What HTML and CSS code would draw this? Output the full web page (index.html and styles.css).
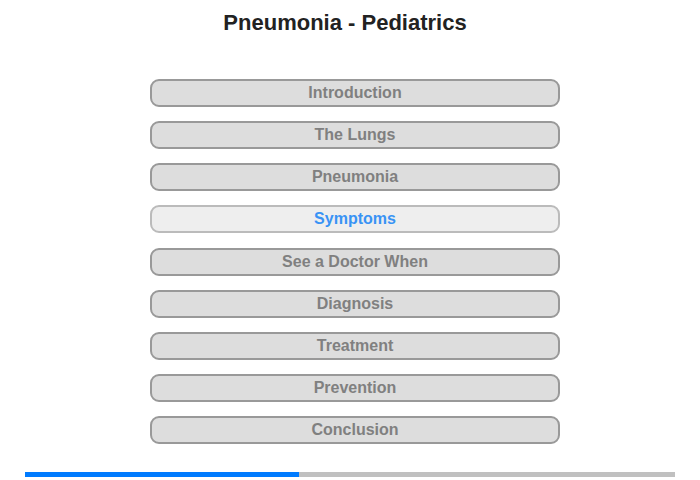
FILE: index.html
```html
<!DOCTYPE html>
<html lang="en">
  <head>
    <meta charset="UTF-8" />
    <title>Pneumonia - Pediatrics</title>
    <link rel="stylesheet" href="styles.css">
  </head>
  <body>
    <div class="page">
      <h1>Pneumonia - Pediatrics</h1>
      <nav class="menu">
        <a href="#" class="item">Introduction</a>
        <a href="#" class="item">The Lungs</a>
        <a href="#" class="item">Pneumonia</a>
        <a href="#" class="item active">Symptoms</a>
        <a href="#" class="item">See a Doctor When</a>
        <a href="#" class="item">Diagnosis</a>
        <a href="#" class="item">Treatment</a>
        <a href="#" class="item">Prevention</a>
        <a href="#" class="item">Conclusion</a>
      </nav>
      <div class="progress">
        <div class="progress-fill" style="width: 42.15%"></div>
      </div>
    </div>
  </body>
</html>
```

FILE: styles.css
```css
* {
  box-sizing: border-box;
  margin: 0;
  padding: 0;
}
body {
  font-family: "Liberation Sans", Arial, sans-serif;
  background: #fff;
  color: #222;
}
.page {
  width: 700px;
  height: 480px;
  padding-top: 10px;
}
h1 {
  width: 690px;
  text-align: center;
  font-size: 22px;
  font-weight: bold;
  line-height: 26px;
  color: #222;
}
.menu {
  display: flex;
  flex-direction: column;
  gap: 14.125px;
  width: 410px;
  margin: 43px 0 0 150px;
}
.item {
  display: block;
  height: 28px;
  line-height: 24px;
  border: 2px solid #999;
  border-radius: 9px;
  background: #ddd;
  color: #808080;
  font-size: 16px;
  font-weight: bold;
  text-align: center;
  text-decoration: none;
}
.item.active {
  background: #eee;
  border-color: #bbb;
  color: #3993f5;
}
.progress {
  width: 650px;
  height: 5px;
  margin: 28px 0 0 25px;
  background: #c0c0c0;
}
.progress-fill {
  height: 100%;
  background: #007bff;
}
```
